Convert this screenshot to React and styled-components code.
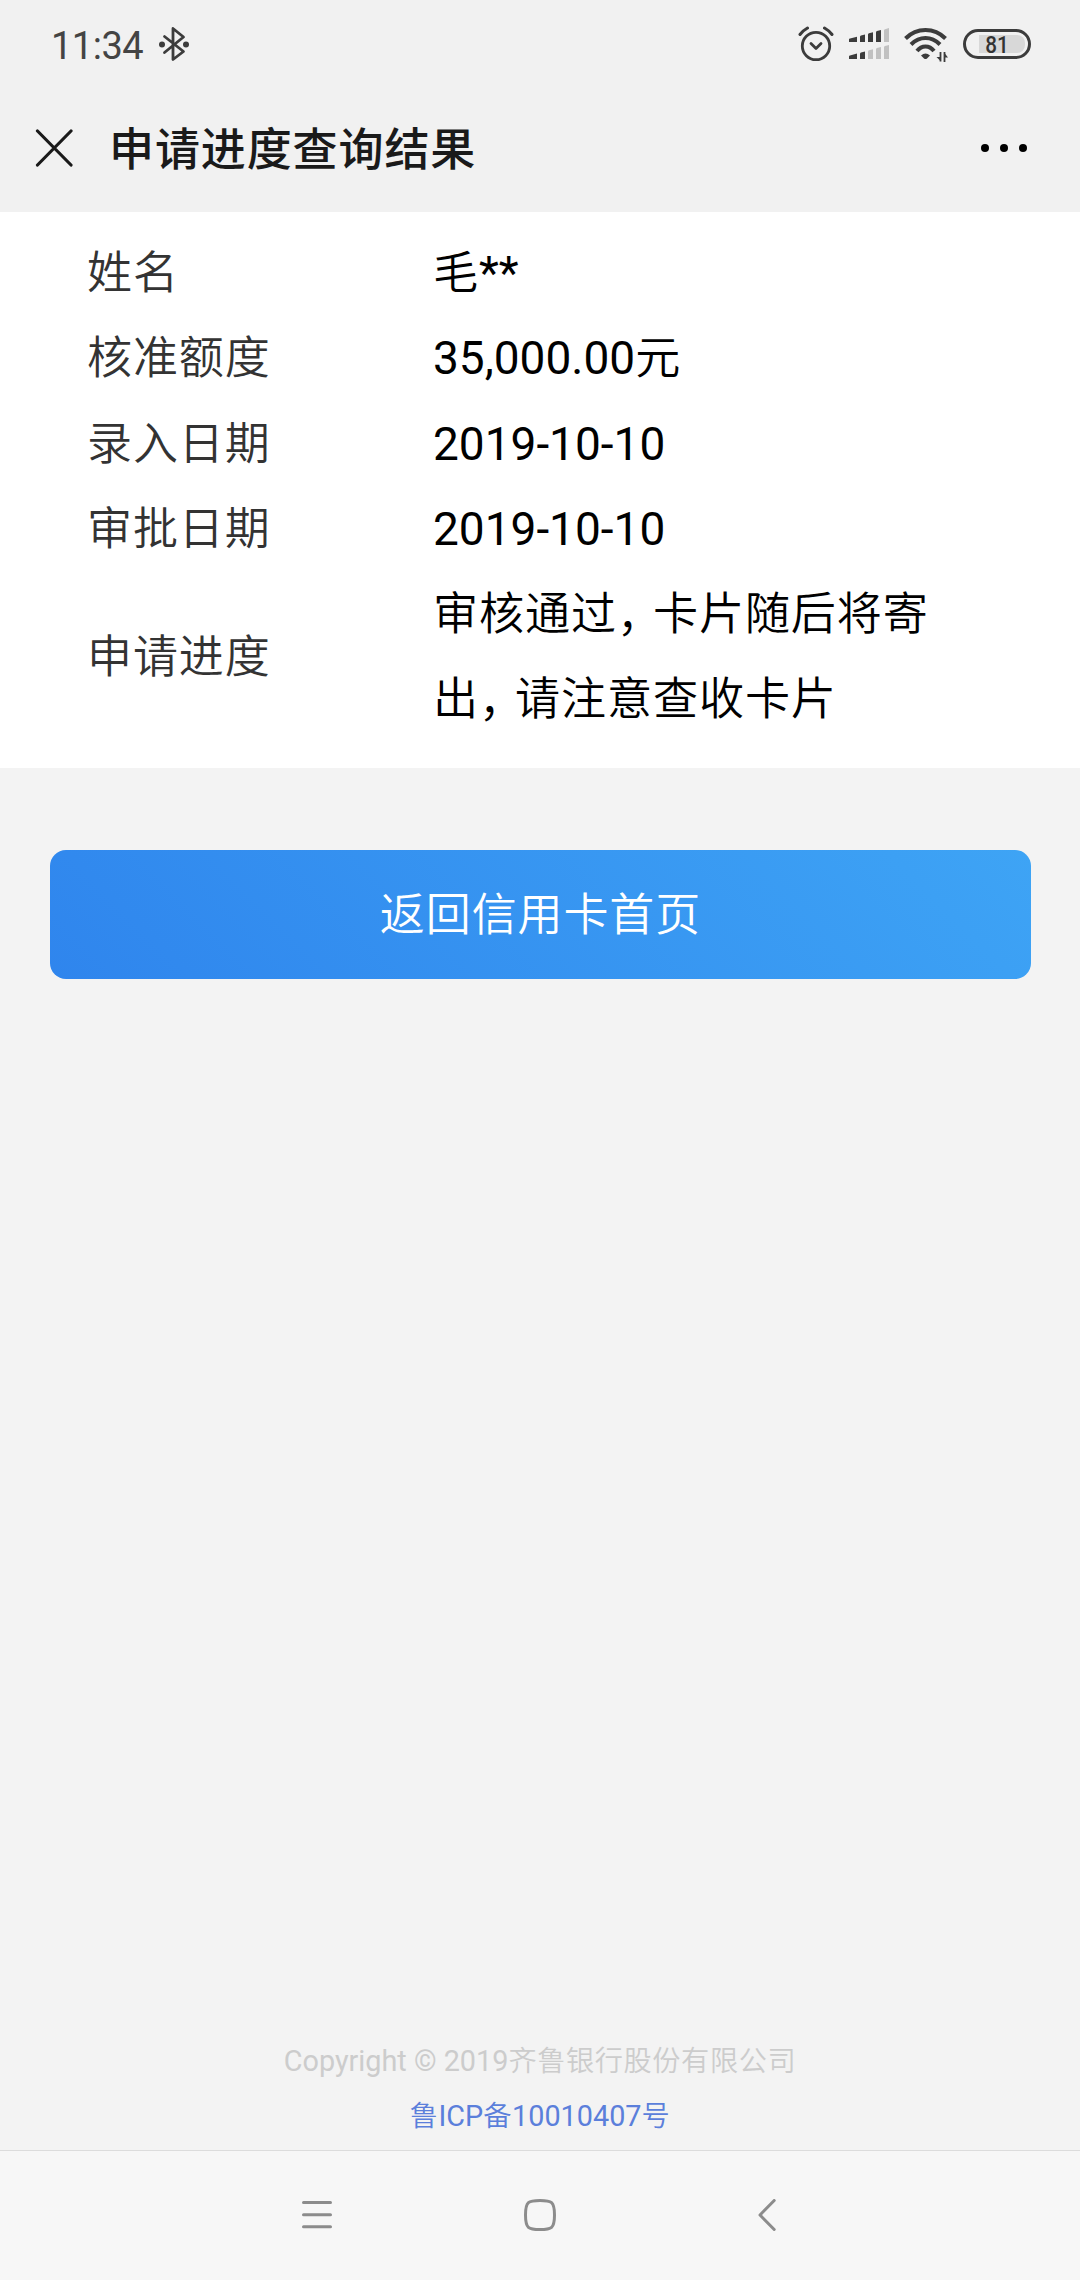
import React from "react";
import styled, { createGlobalStyle } from "styled-components";

const rows = [
  { label: "姓名", value: <><Han>毛</Han>**</> },
  { label: "核准额度", value: <>35,000.00<Han>元</Han></> },
  { label: "录入日期", value: "2019-10-10" },
  { label: "审批日期", value: "2019-10-10" },
  {
    label: "申请进度",
    value: (
      <>
        <Line>审核通过<Comma>，</Comma>卡片随后将寄</Line>
        <Line>出<Comma>，</Comma>请注意查收卡片</Line>
      </>
    ),
  },
];

function Han({ children }) {
  return <HanText>{children}</HanText>;
}

function Line({ children }) {
  return <LineText><Han>{children}</Han></LineText>;
}

function Comma({ children }) {
  return <CommaText>{children}</CommaText>;
}

function BluetoothIcon() {
  return (
    <svg width="32" height="36" viewBox="0 0 32 36" fill="none" stroke="#3c3c3c" strokeWidth="2.8" strokeLinecap="round" strokeLinejoin="round">
      <path d="M6.5 10.5L25.5 25.5L15 33.5V2.5L25.5 11L6.5 26.5" />
      <circle cx="4" cy="18.5" r="3" fill="#3c3c3c" stroke="none" />
      <circle cx="28" cy="18.5" r="3" fill="#3c3c3c" stroke="none" />
    </svg>
  );
}

function AlarmIcon() {
  return (
    <svg width="36" height="36" viewBox="0 0 36 36" fill="none" stroke="#3c3c3c" strokeWidth="2.8" strokeLinecap="round" strokeLinejoin="round">
      <circle cx="18" cy="20" r="13.7" />
      <path d="M13 17.5L18 22.5L23 17.5" />
      <path d="M2 8.5Q5 4.5 9.5 2M26.500 2Q31 4.500 34 8.500" strokeWidth="3" />
    </svg>
  );
}

function SignalIcon() {
  return (
    <svg width="40" height="32" viewBox="0 0 40 32" fill="#3c3c3c">
      <path d="M0 14V11.300Q0 10.600 1 10.400L8 8.700V14Z" />
      <path d="M11 14V8.800Q11 7.800 12 7.600L16 6.500V14Z" />
      <path d="M19 14V6.500Q19 5.500 20 5.300L24 4.300V14Z" />
      <path d="M27 14V4.300Q27 3.300 28 3L32 2V14Z" />
      <path d="M35 14V2.500Q35 1.500 36 1.200L40 0V14Z" fill="#c1c1c1" />
      <path d="M0 31V28.500Q0 27.700 1 27.500L8 25.600V31Z" />
      <path d="M11 31V25.600Q11 24.800 12 24.500L16 23.400V31Z" />
      <g fill="#c1c1c1">
        <path d="M19 31V23.500Q19 22.600 20 22.300L24 21.200V31Z" />
        <path d="M27 31V21.300Q27 20.400 28 20.100L32 19V31Z" />
        <path d="M35 31V19.300Q35 18.400 36 18.100L40 17V31Z" />
      </g>
    </svg>
  );
}

function WifiIcon() {
  return (
    <svg width="44" height="36" viewBox="0 0 44 36" fill="none" stroke="#3c3c3c" strokeWidth="4">
      <path d="M1.500 12.500Q10 4 21.500 4T41.500 12.500" />
      <path d="M7 18.500Q13.500 12 21.500 12T36 18.500" />
      <path d="M13 25Q16.500 20.400 21.500 20.400T30 25" />
      <path d="M17 29.500Q21.500 25.500 26 29.500L23 32.500Q21.500 33.500 20 32.500Z" fill="#3c3c3c" stroke="none" />
      <path d="M36.500 26V35.500M40.500 36V26" strokeWidth="1.800" />
      <path d="M32.500 31H36.500V35Z M40.500 27V31.500H44Z" fill="#3c3c3c" stroke="none" />
    </svg>
  );
}

function CloseIcon() {
  return (
    <svg width="38" height="38" viewBox="0 0 38 38" fill="none" stroke="#1a1a1a" strokeWidth="3.200" strokeLinecap="round">
      <path d="M2.500 2L36 36M36 2L2.500 36" />
    </svg>
  );
}

function MenuIcon() {
  return (
    <svg width="30" height="32" viewBox="0 0 30 32" stroke="#8c8c8c" strokeWidth="3" strokeLinecap="round">
      <path d="M1.500 3.500H28.500M1.500 15.700H28.500M1.500 27.700H28.500" />
    </svg>
  );
}

function HomeIcon() {
  return (
    <svg width="32" height="32" viewBox="0 0 32 32" fill="none" stroke="#8c8c8c" strokeWidth="3">
      <path d="M16 1.500C27.500 1.500 30.500 2.500 30.500 16S27.500 30.500 16 30.500S1.500 29.500 1.500 16S4.500 1.500 16 1.500Z" />
    </svg>
  );
}

function BackIcon() {
  return (
    <svg width="18" height="32" viewBox="0 0 18 32" fill="none" stroke="#8c8c8c" strokeWidth="3" strokeLinecap="round" strokeLinejoin="round">
      <path d="M16.200 1.500L2 16L16.200 30.500" />
    </svg>
  );
}

function App() {
  return (
    <Screen>
      <GlobalStyle />
      <StatusBar>
        <Clock>11:34</Clock>
        <BluetoothIcon />
        <StatusIcons>
          <AlarmIcon />
          <SignalIcon />
          <WifiIcon />
          <Battery>
            <Charge><Percent>81</Percent></Charge>
          </Battery>
        </StatusIcons>
      </StatusBar>
      <Header>
        <CloseIcon />
        <Title>申请进度查询结果</Title>
        <More>
          <Dot />
          <Dot />
          <Dot />
        </More>
      </Header>
      <Card>
        {rows.map((row) => (
          <Row key={row.label}>
            <Label>{row.label}</Label>
            <Value>{row.value}</Value>
          </Row>
        ))}
      </Card>
      <Button>返回信用卡首页</Button>
      <Footer>
        <Copyright>Copyright © 2019<Han>齐鲁银行股份有限公司</Han></Copyright>
        <Record><Han>鲁</Han>ICP<Han>备</Han>10010407<Han>号</Han></Record>
      </Footer>
      <NavBar>
        <MenuIcon />
        <HomeIcon />
        <BackIcon />
      </NavBar>
    </Screen>
  );
}

export default App;

const GlobalStyle = createGlobalStyle`
  * {
    box-sizing: border-box;
  }

  body {
    margin: 0;
    background-color: #f3f3f3;
    font-family: Roboto, "Noto Sans CJK SC", sans-serif;
  }

  svg {
    display: block;
    flex-shrink: 0;
  }
`;

const Screen = styled.div`
  width: 1080px;
  height: 2280px;
  display: flex;
  flex-direction: column;
  overflow: hidden;
`;

const StatusBar = styled.div`
  height: 88px;
  padding: 0 49px 0 51px;
  display: flex;
  align-items: center;
  background-color: #f1f1f1;
`;

const Clock = styled.span`
  width: 107px;
  font-size: 38px;
  line-height: 44px;
  letter-spacing: -0.5px;
  padding-top: 4px;
  color: #444;
`;

const StatusIcons = styled.div`
  margin-left: auto;
  display: flex;
  align-items: center;
  gap: 15px;
`;

const Battery = styled.div`
  width: 68px;
  height: 30px;
  padding: 3px;
  border: 3px solid #3c3c3c;
  border-radius: 15px;
  display: flex;
  justify-content: flex-end;
`;

const Charge = styled.div`
  width: 46px;
  height: 18px;
  border-radius: 0 8px 8px 0;
  background-color: #d8d8d8;
`;

const Percent = styled.span`
  display: block;
  width: 36px;
  text-align: center;
  font-size: 24px;
  font-weight: 500;
  line-height: 20px;
  color: #333;
  transform: scaleX(0.86);
`;

const Header = styled.div`
  height: 124px;
  padding: 0 53px 5px 35px;
  display: flex;
  align-items: center;
  background-color: #f1f1f1;
`;

const Title = styled.h1`
  margin: 0 0 3px 36px;
  font-size: 45px;
  font-weight: 500;
  letter-spacing: 0.9px;
  color: #1a1a1a;
`;

const More = styled.div`
  margin-left: auto;
  padding-top: 1px;
  display: flex;
  gap: 11px;
`;

const Dot = styled.span`
  width: 8px;
  height: 8px;
  border-radius: 50%;
  background-color: #000;
`;

const Card = styled.div`
  height: 556px;
  padding: 19px 87px 0;
  background-color: #fff;
`;

const Row = styled.div`
  display: grid;
  grid-template-columns: 346px 520px;
  align-items: center;
  font-size: 46px;
  line-height: 85.3px;
`;

const Label = styled.div`
  font-size: 45px;
  font-weight: 350;
  letter-spacing: 0.9px;
  color: #333;
`;

const Value = styled.div`
  color: #000;
`;

const LineText = styled.div`
  height: 85.3px;
  white-space: nowrap;
`;

const HanText = styled.span`
  font-size: 0.98em;
  font-weight: 350;
  letter-spacing: 0.02em;
`;

const CommaText = styled.span`
  display: inline-block;
  width: 36px;
  line-height: 1;
  vertical-align: -2px;
  font-feature-settings: "halt";
`;

const Button = styled.button`
  width: 981px;
  height: 129px;
  margin: 82px 0 0 50px;
  padding: 0 0 6px;
  border: none;
  border-radius: 16px;
  background: linear-gradient(45deg, #2f85ed, #3ea4f5);
  color: #fff;
  font-family: inherit;
  font-size: 45px;
  font-weight: 350;
  letter-spacing: 0.9px;
`;

const Footer = styled.div`
  margin-top: auto;
  padding-bottom: 6px;
  text-align: center;
  font-size: 28.8px;
  line-height: 55px;
`;

const Copyright = styled.div`
  color: #ccc;
`;

const Record = styled.div`
  color: #5b7fdb;
`;

const NavBar = styled.div`
  height: 130px;
  padding: 0 304px 2px 302px;
  border-top: 1px solid #dcdcdc;
  background-color: #f7f7f7;
  display: grid;
  grid-template-columns: 222px 234px 18px;
  align-items: center;
`;
